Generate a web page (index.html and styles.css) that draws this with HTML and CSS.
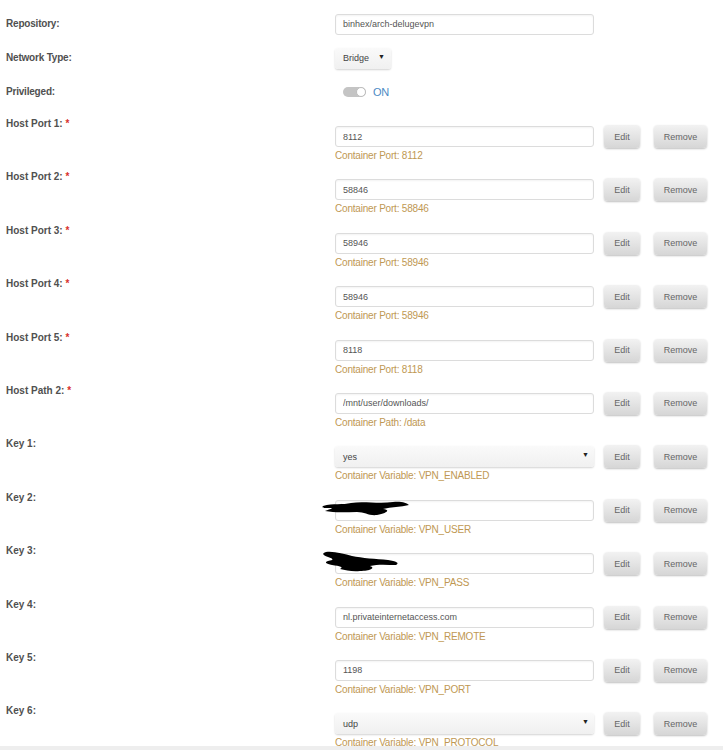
FILE: index.html
```html
<!DOCTYPE html>
<html lang="en">

<head>
  <meta charset="UTF-8" />
  <title>Update Container</title>
  <link rel="stylesheet" href="styles.css">
</head>

<body>
  <div class="page">

    <!-- General settings -->
    <div class="row simple">
      <div class="label">Repository:</div>
      <div class="field"><input class="text" type="text" value="binhex/arch-delugevpn"></div>
    </div>
    <div class="row simple">
      <div class="label">Network Type:</div>
      <div class="field">
        <div class="dropdown small"><span>Bridge</span></div>
      </div>
    </div>
    <div class="row simple">
      <div class="label">Privileged:</div>
      <div class="field">
        <span class="switch"><span class="knob"></span></span>
        <span class="switch-text">ON</span>
      </div>
    </div>

    <!-- Ports, paths and variables -->
    <div class="list">
      <div class="row item">
        <div class="label">Host Port 1: <span class="req">*</span></div>
        <div class="field">
          <div class="line">
            <input class="text" type="text" value="8112">
            <button class="btn edit">Edit</button>
            <button class="btn remove">Remove</button>
          </div>
          <div class="help">Container Port: 8112</div>
        </div>
      </div>
      <div class="row item">
        <div class="label">Host Port 2: <span class="req">*</span></div>
        <div class="field">
          <div class="line">
            <input class="text" type="text" value="58846">
            <button class="btn edit">Edit</button>
            <button class="btn remove">Remove</button>
          </div>
          <div class="help">Container Port: 58846</div>
        </div>
      </div>
      <div class="row item">
        <div class="label">Host Port 3: <span class="req">*</span></div>
        <div class="field">
          <div class="line">
            <input class="text" type="text" value="58946">
            <button class="btn edit">Edit</button>
            <button class="btn remove">Remove</button>
          </div>
          <div class="help">Container Port: 58946</div>
        </div>
      </div>
      <div class="row item">
        <div class="label">Host Port 4: <span class="req">*</span></div>
        <div class="field">
          <div class="line">
            <input class="text" type="text" value="58946">
            <button class="btn edit">Edit</button>
            <button class="btn remove">Remove</button>
          </div>
          <div class="help">Container Port: 58946</div>
        </div>
      </div>
      <div class="row item">
        <div class="label">Host Port 5: <span class="req">*</span></div>
        <div class="field">
          <div class="line">
            <input class="text" type="text" value="8118">
            <button class="btn edit">Edit</button>
            <button class="btn remove">Remove</button>
          </div>
          <div class="help">Container Port: 8118</div>
        </div>
      </div>
      <div class="row item">
        <div class="label">Host Path 2: <span class="req">*</span></div>
        <div class="field">
          <div class="line">
            <input class="text" type="text" value="/mnt/user/downloads/">
            <button class="btn edit">Edit</button>
            <button class="btn remove">Remove</button>
          </div>
          <div class="help">Container Path: /data</div>
        </div>
      </div>
      <div class="row item">
        <div class="label">Key 1:</div>
        <div class="field">
          <div class="line">
            <div class="dropdown wide"><span>yes</span></div>
            <button class="btn edit">Edit</button>
            <button class="btn remove">Remove</button>
          </div>
          <div class="help">Container Variable: VPN_ENABLED</div>
        </div>
      </div>
      <div class="row item">
        <div class="label">Key 2:</div>
        <div class="field">
          <div class="line">
            <input class="text" type="text" value="">
            <button class="btn edit">Edit</button>
            <button class="btn remove">Remove</button>
          </div>
          <div class="help">Container Variable: VPN_USER</div>
          <svg class="redact user" viewBox="0 0 89 15" preserveAspectRatio="none">
            <path d="M2 5 C12 2 22 4 30 2 C42 0 58 3 72 1 C80 0 86 2 88 4 C80 6 70 6 62 8 C70 9 66 12 56 14 C48 15 44 11 36 11 C26 11 14 12 4 10 C10 8 14 7 8 7 C4 7 0 7 2 5 Z" fill="#000"/>
          </svg>
        </div>
      </div>
      <div class="row item">
        <div class="label">Key 3:</div>
        <div class="field">
          <div class="line">
            <input class="text" type="text" value="">
            <button class="btn edit">Edit</button>
            <button class="btn remove">Remove</button>
          </div>
          <div class="help">Container Variable: VPN_PASS</div>
          <svg class="redact pass" viewBox="0 0 78 21" preserveAspectRatio="none">
            <path d="M4 1 C12 0 22 3 30 5 C40 7 54 8 66 9 C74 10 78 12 74 14 C66 14 56 13 48 15 C54 17 48 20 38 20 C30 21 24 19 18 18 C22 16 18 15 10 14 C4 13 2 11 6 10 C12 9 12 8 6 6 C0 4 0 2 4 1 Z" fill="#000"/>
          </svg>
        </div>
      </div>
      <div class="row item">
        <div class="label">Key 4:</div>
        <div class="field">
          <div class="line">
            <input class="text" type="text" value="nl.privateinternetaccess.com">
            <button class="btn edit">Edit</button>
            <button class="btn remove">Remove</button>
          </div>
          <div class="help">Container Variable: VPN_REMOTE</div>
        </div>
      </div>
      <div class="row item">
        <div class="label">Key 5:</div>
        <div class="field">
          <div class="line">
            <input class="text" type="text" value="1198">
            <button class="btn edit">Edit</button>
            <button class="btn remove">Remove</button>
          </div>
          <div class="help">Container Variable: VPN_PORT</div>
        </div>
      </div>
      <div class="row item">
        <div class="label">Key 6:</div>
        <div class="field">
          <div class="line">
            <div class="dropdown wide"><span>udp</span></div>
            <button class="btn edit">Edit</button>
            <button class="btn remove">Remove</button>
          </div>
          <div class="help">Container Variable: VPN_PROTOCOL</div>
        </div>
      </div>
    </div>

  </div>
</body>

</html>
```

FILE: styles.css
```css
* {
  box-sizing: border-box;
}

html,
body {
  margin: 0;
  padding: 0;
  background-color: #eeeeee;
  font-family: "Liberation Sans", Arial, sans-serif;
}

.page {
  background-color: #fff;
  height: 746px;
  padding: 7px 0 0 6px;
}

.row {
  display: grid;
  grid-template-columns: 329px 1fr;
}

.row.simple {
  height: 34px;
  align-items: center;
}

.list {
  margin-top: 7px;
}

.row.item {
  height: 53.4px;
  align-items: start;
}

.label {
  font-size: 10px;
  font-weight: bold;
  color: #505050;
  line-height: 16px;
}

.row.simple .label {
  letter-spacing: -0.2px;
}

.req {
  color: #d9302c;
}

.field {
  position: relative;
  display: flex;
  align-items: center;
}

.row.item .field {
  display: block;
  padding-top: 9px;
}

.line {
  display: flex;
  align-items: center;
}

input.text {
  width: 259px;
  height: 21px;
  margin: 0;
  padding: 0 7px;
  border: 1px solid #dcdcdc;
  border-radius: 3px;
  box-shadow: inset 0 1px 2px rgba(0, 0, 0, 0.05);
  font-family: "Liberation Sans", Arial, sans-serif;
  font-size: 9px;
  color: #555;
  outline: none;
}

/* drop-down boxes */
.dropdown {
  position: relative;
  height: 21px;
  padding: 0 8px;
  display: flex;
  align-items: center;
  font-size: 9px;
  color: #444;
  background: linear-gradient(#fafafa, #f0f0f0);
  border-radius: 3px;
  box-shadow: 0 1px 2px rgba(0, 0, 0, 0.18);
}

.dropdown::after {
  content: "\25BC";
  position: absolute;
  top: 5px;
  font-size: 7px;
  color: #222;
}

.dropdown.small {
  width: 56px;
}

.dropdown.small::after {
  right: 6px;
}

.dropdown.wide {
  width: 259px;
}

.dropdown.wide::after {
  right: 5px;
}

/* privileged switch */
.switch {
  display: inline-block;
  position: relative;
  width: 23px;
  height: 10px;
  margin-left: 8px;
  border-radius: 5px;
  background-color: #c4c4c4;
}

.knob {
  position: absolute;
  right: 0;
  top: 0;
  width: 10px;
  height: 10px;
  border-radius: 50%;
  background-color: #fff;
  border: 1px solid #bdbdbd;
}

.switch-text {
  margin-left: 7px;
  font-size: 11px;
  color: #4d8ac4;
  letter-spacing: -0.3px;
}

.btn {
  height: 23px;
  margin: 0 0 0 10px;
  padding: 0;
  border: none;
  border-radius: 4px;
  background: linear-gradient(#f2f2f2, #d6d6d6);
  box-shadow: 0 1px 2px rgba(0, 0, 0, 0.25);
  font-family: "Liberation Sans", Arial, sans-serif;
  font-size: 9px;
  color: #666;
  cursor: pointer;
}

.btn.edit {
  width: 36px;
}

.btn.remove {
  width: 53px;
  margin-left: 14px;
}

.help {
  margin-top: 2px;
  font-size: 10px;
  line-height: 12px;
  color: #c09853;
  letter-spacing: -0.2px;
}

/* blacked-out values */
.redact {
  position: absolute;
}

.redact.user {
  left: -14px;
  top: 11px;
  width: 89px;
  height: 15px;
}

.redact.pass {
  left: -13px;
  top: 8px;
  width: 78px;
  height: 21px;
}
```
